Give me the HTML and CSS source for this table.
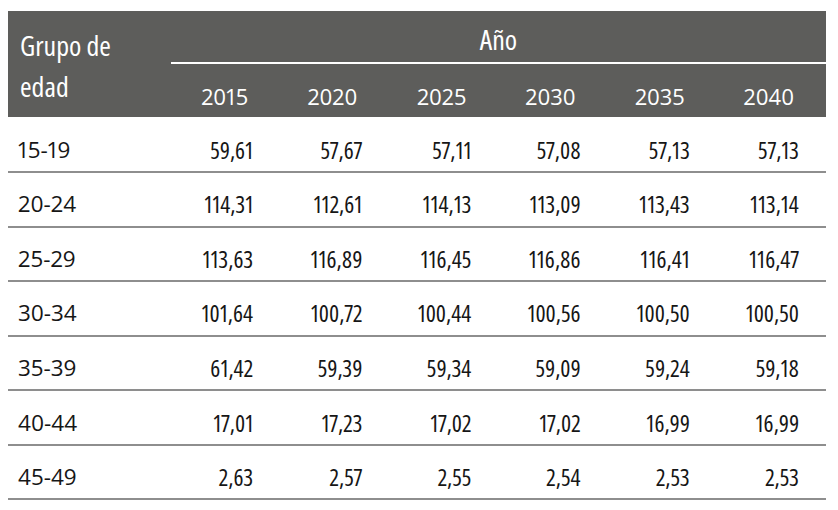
FILE: index.html
```html
<!DOCTYPE html>
<html lang="es">
<head>
<meta charset="utf-8">
<title>Tabla por grupo de edad</title>
<link rel="stylesheet" href="styles.css">
</head>
<body>
<table class="data">
  <colgroup>
    <col class="c-label">
    <col class="c-year"><col class="c-year"><col class="c-year">
    <col class="c-year"><col class="c-year"><col class="c-year">
  </colgroup>
  <thead>
    <tr>
      <th class="group" rowspan="2">Grupo de<br>edad</th>
      <th class="year-head" colspan="6">Año</th>
    </tr>
    <tr>
      <th class="yr">2015</th>
      <th class="yr">2020</th>
      <th class="yr">2025</th>
      <th class="yr">2030</th>
      <th class="yr">2035</th>
      <th class="yr">2040</th>
    </tr>
  </thead>
  <tbody>
    <tr><td class="label">15-19</td><td class="num">59,61</td><td class="num">57,67</td><td class="num">57,11</td><td class="num">57,08</td><td class="num">57,13</td><td class="num">57,13</td></tr>
    <tr><td class="label">20-24</td><td class="num">114,31</td><td class="num">112,61</td><td class="num">114,13</td><td class="num">113,09</td><td class="num">113,43</td><td class="num">113,14</td></tr>
    <tr><td class="label">25-29</td><td class="num">113,63</td><td class="num">116,89</td><td class="num">116,45</td><td class="num">116,86</td><td class="num">116,41</td><td class="num">116,47</td></tr>
    <tr><td class="label">30-34</td><td class="num">101,64</td><td class="num">100,72</td><td class="num">100,44</td><td class="num">100,56</td><td class="num">100,50</td><td class="num">100,50</td></tr>
    <tr><td class="label">35-39</td><td class="num">61,42</td><td class="num">59,39</td><td class="num">59,34</td><td class="num">59,09</td><td class="num">59,24</td><td class="num">59,18</td></tr>
    <tr><td class="label">40-44</td><td class="num">17,01</td><td class="num">17,23</td><td class="num">17,02</td><td class="num">17,02</td><td class="num">16,99</td><td class="num">16,99</td></tr>
    <tr><td class="label">45-49</td><td class="num">2,63</td><td class="num">2,57</td><td class="num">2,55</td><td class="num">2,54</td><td class="num">2,53</td><td class="num">2,53</td></tr>
  </tbody>
</table>
</body>
</html>
```

FILE: styles.css
```css
body {
  margin: 0;
  background: #ffffff;
  font-family: "Open Sans", "Roboto Condensed", "Liberation Sans", sans-serif;
  font-stretch: 75%;
  color: #161616;
}

.data {
  margin: 11px 0 0 8px;
  width: 818px;
  border-collapse: separate;
  border-spacing: 0;
  table-layout: fixed;
}

.c-label {
  width: 163px;
}

.data thead th {
  background: #5d5d5b;
  color: #ffffff;
  font-weight: normal;
  padding: 0;
}

.group {
  text-align: left;
  vertical-align: top;
  font-size: 28px;
  line-height: 41px;
  padding: 13.5px 0 0 12px !important;
}

.year-head {
  text-align: center;
  vertical-align: top;
  font-size: 28px;
  line-height: 30px;
  padding: 12.5px 0 8.5px 0 !important;
  border-bottom: 2px solid #ffffff;
}

.yr {
  text-align: right;
  vertical-align: top;
  font-size: 22px;
  line-height: 26px;
  font-stretch: 88%;
  font-variant-numeric: proportional-nums;
  padding: 18.5px 32px 8.5px 0 !important;
}

.data tbody td {
  font-size: 23.5px;
  line-height: 28px;
  font-stretch: 75%;
  font-variant-numeric: proportional-nums;
  padding: 17.45px 0 7.1px 0;
  border-bottom: 2px solid #8e8e8e;
  vertical-align: top;
}

.data tbody tr:first-child td {
  padding-top: 18.9px;
}

.data tbody td.label {
  padding-left: 10px;
  font-size: 22.5px;
  font-stretch: 88%;
}

.num {
  text-align: right;
  padding-right: 27px !important;
}
```
